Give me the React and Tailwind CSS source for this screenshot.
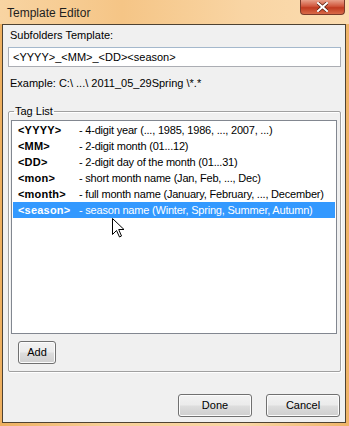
import { useState } from "react";

const tags = [
  { tag: "<YYYY>", desc: "- 4-digit year (..., 1985, 1986, ..., 2007, ...)" },
  { tag: "<MM>", desc: "- 2-digit month (01...12)" },
  { tag: "<DD>", desc: "- 2-digit day of the month (01...31)" },
  { tag: "<mon>", desc: "- short month name (Jan, Feb, ..., Dec)" },
  { tag: "<month>", desc: "- full month name (January, February, ..., December)" },
  { tag: "<season>", desc: "- season name (Winter, Spring, Summer, Autumn)" },
];

function WinButton({ children, className }) {
  return (
    <button
      className={`h-[23px] rounded-[3px] border border-[#707070] bg-[linear-gradient(#f2f2f2_0%,#ebebeb_48%,#dddddd_52%,#cfcfcf_100%)] text-[11px] text-black shadow-[inset_0_0_0_1px_#fcfcfc] ${className}`}
    >
      {children}
    </button>
  );
}

export default function App() {
  const [selected, setSelected] = useState(5);
  const [template, setTemplate] = useState("<YYYY>_<MM>_<DD><season>");

  return (
    <div
      className="w-[349px] h-[426px] flex flex-col pl-[2px] pr-[3px] pb-[3px] bg-[linear-gradient(90deg,#eeb060_0%,#f7cf98_30%,#f9d6a6_70%,#efb468_100%)] overflow-hidden"
      style={{ fontFamily: '"Liberation Sans", Arial, sans-serif' }}
    >
      {/* title bar */}
      <div className="h-[24px] flex items-start justify-between bg-[linear-gradient(90deg,#f8d4a2_0%,#f5c586_35%,#f9d5a4_70%,#fbdcb0_100%)] -ml-[2px] -mr-[3px] pl-[7px]">
        <span className="mt-[4px] text-[12px] text-[#1e1e1e]">Template Editor</span>
        <div className="mr-[4px] w-[45px] h-[15px] rounded-b-[4px] border border-t-0 border-[#7a3a2a] bg-[linear-gradient(#e8a08a_0%,#d0563c_45%,#c03a20_55%,#d86a48_100%)] flex items-center justify-center">
          <svg width="11" height="10" viewBox="0 0 11 10">
            <path d="M1 1 L10 9 M10 1 L1 9" stroke="#5a2010" strokeWidth="3.4" strokeLinecap="square" />
            <path d="M1 1 L10 9 M10 1 L1 9" stroke="#ffffff" strokeWidth="2" strokeLinecap="square" />
          </svg>
        </div>
      </div>

      {/* client area */}
      <div className="flex-1 flex flex-col border border-[#4e4232] bg-[#f0f0f0] text-[11px] text-black">
        <div className="ml-[7px] mt-[4px] leading-[13px]">Subfolders Template:</div>
        <input
          value={template}
          onChange={(e) => setTemplate(e.target.value)}
          className="ml-[5px] mr-[4px] mt-[5px] h-[20px] px-[4px] border border-[#abadb3] border-t-[#a4b8cc] bg-white text-[11px] outline-none"
        />
        <div className="ml-[7px] mt-[10px] leading-[13px]">Example: C:\ ...\ 2011_05_29Spring \*.*</div>

        <fieldset className="ml-[5px] mr-[4px] mt-[15px] border border-[#a0a0a0] rounded-[2px] shadow-[inset_1px_1px_0_#ffffff,1px_1px_0_#ffffff] px-[2px] pb-[7px]">
          <legend className="ml-[3px] px-[1px] leading-[13px]">Tag List</legend>
          <div className="mt-[2px] mr-[1px] h-[214px] border border-[#828790] bg-white p-[1px]">
            {tags.map((t, i) => (
              <div
                key={t.tag}
                onClick={() => setSelected(i)}
                className={`h-[16px] flex items-center pl-[5px] leading-[16px] ${
                  selected === i ? "bg-[#3399ff] text-white" : "text-black"
                }`}
              >
                <span className="w-[61px] font-bold tracking-[0.2px]">{t.tag}</span>
                <span className="tracking-[-0.2px]">{t.desc}</span>
              </div>
            ))}
          </div>
          <WinButton className="ml-[7px] mt-[7px] w-[38px]">Add</WinButton>
        </fieldset>

        <div className="flex justify-end gap-[14px] mt-auto mb-[5px] mr-[5px]">
          <WinButton className="w-[74px]">Done</WinButton>
          <WinButton className="w-[74px]">Cancel</WinButton>
        </div>
      </div>

      {/* mouse pointer */}
      <svg
        className="absolute left-[112px] top-[218px]"
        width="13"
        height="20"
        viewBox="0 0 13 20"
      >
        <path
          d="M0.5 0.5 L0.5 16.5 L4.5 12.5 L7.5 19 L9.5 18 L6.7 11.5 L12 11.5 Z"
          fill="#ffffff"
          stroke="#000000"
          strokeWidth="1"
        />
      </svg>
    </div>
  );
}
